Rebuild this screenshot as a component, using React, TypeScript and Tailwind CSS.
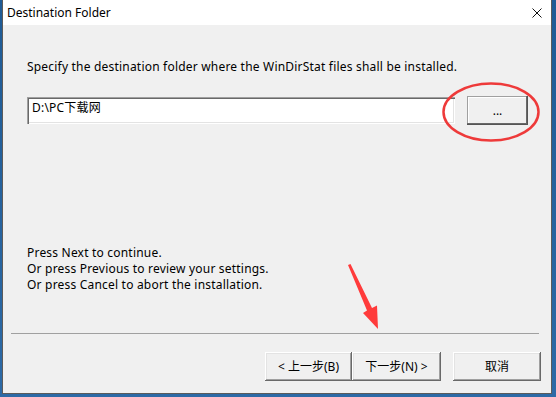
import React from "react";

const font = { fontFamily: '"Noto Sans", "Noto Sans CJK SC", sans-serif' };

function Btn({ children, w }: { children: React.ReactNode; w: string }) {
  return (
    <div
      className={`${w} h-[29px] flex items-center justify-center bg-[#f0f0f0] text-[12px] text-black shadow-[inset_-1px_-1px_#696969,inset_1px_1px_#ffffff,inset_-2px_-2px_#a0a0a0,inset_2px_2px_#e3e3e3]`}
    >
      {children}
    </div>
  );
}

export default function App() {
  return (
    <div
      className="w-[556px] h-[397px] overflow-hidden bg-gradient-to-b from-[#1f5b95] to-[#2d6aa6] relative"
      style={font}
    >
      <div className="ml-[2px] w-[550px] h-[394px] border-x border-b border-[#5b5b5b] flex flex-col bg-[#f0f0f0]">
        {/* Title bar */}
        <div className="h-[25px] bg-white flex items-center justify-between pl-[4px] pr-[9px]">
          <span className="text-[12px] text-black leading-none">Destination Folder</span>
          <svg width="10" height="10" viewBox="0 0 10 10">
            <path d="M0.5 0.5 L9.5 9.5 M9.5 0.5 L0.5 9.5" stroke="#111" strokeWidth="1" fill="none" />
          </svg>
        </div>

        {/* Body */}
        <div className="flex-1 relative flex flex-col">
          <div className="pl-[24px] pt-[34px] text-[12px] leading-[16px] tracking-[0.2px] text-black">
            Specify the destination folder where the WinDirStat files shall be installed.
          </div>

          <div className="pl-[24px] mt-[21px] flex items-center gap-[12px]">
            <div className="w-[428px] h-[27px] bg-white shadow-[inset_1px_1px_#a0a0a0,inset_2px_2px_#696969,inset_-1px_-1px_#ffffff,inset_-2px_-2px_#e3e3e3] pl-[5px] pt-[3px] text-[12px] leading-[16px] tracking-[0.2px] text-black">
              D:\PC下载网
            </div>
            <div className="w-[61px] h-[29px] flex items-center justify-center bg-[#f0f0f0] text-[12px] text-black shadow-[inset_-1px_-1px_#555555,inset_-2px_-2px_#696969,inset_1px_1px_#a0a0a0,inset_2px_2px_#ffffff]">
              ...
            </div>
          </div>

          <div className="pl-[24px] mt-[120px] text-[12px] leading-[16px] tracking-[0.2px] text-black">
            <div>Press Next to continue.</div>
            <div>Or press Previous to review your settings.</div>
            <div>Or press Cancel to abort the installation.</div>
          </div>

          <div className="ml-[8px] mr-[12px] mt-[40px] h-px bg-[#a0a0a0]" />

          <div className="mt-[18px] flex pl-[262px]">
            <Btn w="w-[87px]">&lt; 上一步(B)</Btn>
            <Btn w="w-[89px]">下一步(N) &gt;</Btn>
            <div className="w-[12px]" />
            <Btn w="w-[88px]">取消</Btn>
          </div>

          {/* annotations */}
          <svg className="absolute left-0 top-0 pointer-events-none" width="550" height="369">
            <ellipse cx="488" cy="87" rx="47.5" ry="28.5" fill="none" stroke="#ee3a3a" strokeWidth="2.5" />
            <polygon points="345,240 347.5,239 369,283 374,280.5 375,304 360,288 364,285.5" fill="#ff3b3b" />
          </svg>
        </div>
      </div>
    </div>
  );
}
